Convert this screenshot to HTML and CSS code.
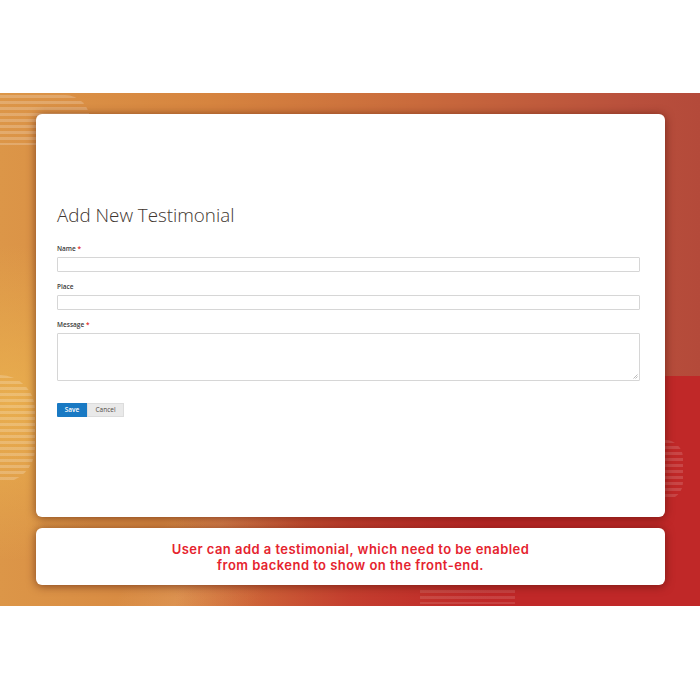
FILE: index.html
```html
<!DOCTYPE html>
<html>
<head>
<meta charset="utf-8">
<link rel="stylesheet" href="styles.css">
</head>
<body>
<div class="page">
  <div class="top"></div>
  <div class="banner">
    <div class="deco red"></div>
    <div class="deco glow"></div>
    <div class="deco sheen"></div>
    <div class="deco stripes s1"></div>
    <div class="deco stripes s2"></div>
    <div class="deco stripes s3"></div>
    <div class="deco stripes s4"></div>
    <div class="card form-card">
      <h1 class="title">Add New Testimonial</h1>
      <div class="field">
        <label class="label">Name <span class="req">*</span></label>
        <div class="input"></div>
      </div>
      <div class="field">
        <label class="label">Place</label>
        <div class="input"></div>
      </div>
      <div class="field">
        <label class="label">Message <span class="req">*</span></label>
        <div class="textarea">
          <svg class="grip" width="5" height="5" viewBox="0 0 5 5"><path d="M4.5 0.5 L0.5 4.5 M4.5 2.5 L2.5 4.5" stroke="#aaa" stroke-width="0.8"/></svg>
        </div>
      </div>
      <div class="actions">
        <span class="btn save">Save</span>
        <span class="btn cancel">Cancel</span>
      </div>
    </div>
    <div class="card caption-card">
      <p class="caption">User can add a testimonial, which need to be enabled<br>from backend to show on the front-end.</p>
    </div>
  </div>
  <div class="bottom"></div>
</div>
</body>
</html>
```

FILE: styles.css
```css
* { box-sizing: border-box; }
html, body { margin: 0; padding: 0; background: #fff; }
.page { width: 700px; height: 700px; display: flex; flex-direction: column; }
.top { height: 93px; background: #fff; }
.bottom { flex: 1; background: #fff; }
.banner {
  position: relative;
  height: 513px;
  padding: 21px 35px 21px 36px;
  display: flex;
  flex-direction: column;
  gap: 11px;
  overflow: hidden;
  background: linear-gradient(90deg, #dc9648 0%, #d6843f 30%, #c96a3c 60%, #b9503c 90%, #b44a3a 100%);
}
.deco { position: absolute; pointer-events: none; }
.red {
  left: 0; top: 283px; right: 0; bottom: 0;
  background: linear-gradient(90deg, rgba(192,40,40,0) 25%, rgba(192,40,40,0.7) 50%, #c02828 70%, #c02828 100%);
}
.glow {
  left: -120px; top: 150px; width: 260px; height: 320px;
  background: radial-gradient(ellipse at center, rgba(236,180,80,0.8) 0%, rgba(236,180,80,0) 70%);
}
.sheen {
  left: 0; top: 420px; width: 360px; bottom: 0;
  background: linear-gradient(120deg, rgba(255,255,255,0) 40%, rgba(255,225,190,0.12) 55%, rgba(255,255,255,0) 75%);
}
.stripes {
  background: repeating-linear-gradient(180deg, rgba(255,255,255,0.2) 0 3px, rgba(255,255,255,0) 3px 6px);
}
.s1 { left: 0; top: 2px; width: 90px; height: 50px; border-radius: 0 40px 40px 0; }
.s2 { left: 0; top: 282px; width: 35px; height: 108px; border-radius: 0 50px 50px 0; }
.s3 { left: 665px; top: 347px; width: 18px; height: 60px; border-radius: 0 30px 30px 0; opacity: 0.7; }
.s4 { left: 420px; top: 497px; width: 95px; height: 14px; opacity: 0.6; }
.card {
  position: relative;
  background: #fff;
  border-radius: 6px;
  box-shadow: 0 1px 10px rgba(70,15,5,0.6);
}
.form-card {
  height: 403px;
  padding: 90px 25px 0 21px;
  display: flex;
  flex-direction: column;
  font-family: "Open Sans", sans-serif;
}
.title {
  margin: 0 0 17px;
  font-weight: 300;
  font-size: 18.8px;
  line-height: 23px;
  color: #41362f;
}
.field { display: flex; flex-direction: column; margin-bottom: 10px; }
.label {
  font-size: 6.5px;
  font-weight: 600;
  line-height: 9px;
  color: #3a3a3a;
  margin-bottom: 4px;
}
.req { color: #e22626; }
.input { height: 15px; border: 1px solid #d6d6d6; border-radius: 1px; }
.textarea { position: relative; height: 48px; border: 1px solid #d6d6d6; border-radius: 1px; }
.grip { position: absolute; right: 1px; bottom: 1px; }
.actions { display: flex; margin-top: 12px; }
.btn {
  height: 14px;
  font-size: 6.5px;
  line-height: 14px;
  font-weight: 600;
  text-align: center;
}
.save { width: 30px; background: #1979c3; color: #fff; border-radius: 1px 0 0 1px; }
.cancel { width: 37px; background: #e9e9e9; color: #514943; font-weight: 400; border: 1px solid #dcdcdc; line-height: 12px; }
.caption-card {
  height: 57px;
  display: flex;
  align-items: center;
  justify-content: center;
}
.caption {
  margin: 0;
  text-align: center;
  font-family: Inter, sans-serif;
  font-weight: 600;
  font-size: 13px;
  letter-spacing: 0.45px;
  line-height: 16px;
  color: #e5232e;
}
```
